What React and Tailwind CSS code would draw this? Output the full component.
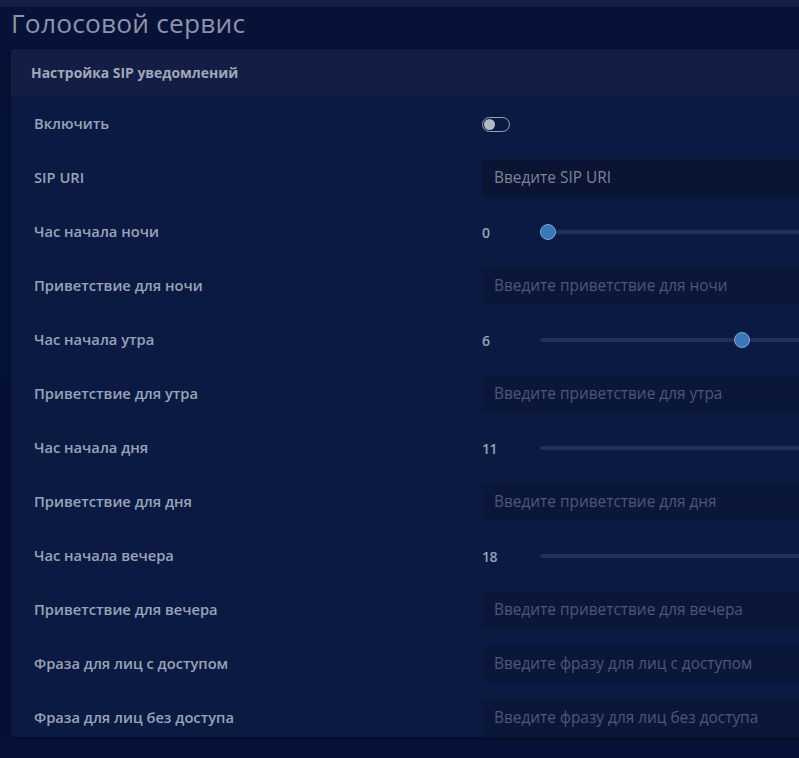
import React from 'react';

const rows = [
  { label: 'Включить', type: 'toggle' },
  { label: 'SIP URI', type: 'input', placeholder: 'Введите SIP URI', active: true },
  { label: 'Час начала ночи', type: 'slider', value: 0 },
  { label: 'Приветствие для ночи', type: 'input', placeholder: 'Введите приветствие для ночи' },
  { label: 'Час начала утра', type: 'slider', value: 6 },
  { label: 'Приветствие для утра', type: 'input', placeholder: 'Введите приветствие для утра' },
  { label: 'Час начала дня', type: 'slider', value: 11 },
  { label: 'Приветствие для дня', type: 'input', placeholder: 'Введите приветствие для дня' },
  { label: 'Час начала вечера', type: 'slider', value: 18 },
  { label: 'Приветствие для вечера', type: 'input', placeholder: 'Введите приветствие для вечера' },
  { label: 'Фраза для лиц с доступом', type: 'input', placeholder: 'Введите фразу для лиц с доступом' },
  { label: 'Фраза для лиц без доступа', type: 'input', placeholder: 'Введите фразу для лиц без доступа' },
];

const Toggle = () => (
  <div className="flex h-[38px] items-center">
    <div className="flex h-[15px] w-[28px] items-center rounded-full border border-[#9aa2b2] px-[1px]">
      <div className="h-[11px] w-[11px] rounded-full bg-[#b3b9c4]" />
    </div>
  </div>
);

const Slider = ({ value }) => (
  <div className="flex h-[38px] items-center">
    <div className="w-[58px] shrink-0 text-[14px] font-semibold tracking-[-0.5px] text-[#9aa3b5]">{value}</div>
    <div className="relative h-[16px] w-[760px] shrink-0">
      <div className="absolute left-0 right-0 top-[6px] h-[4px] rounded-full bg-[#232f58]" />
      <div
        className="absolute top-0 h-[16px] w-[16px] rounded-full border border-[#7fa6cf] bg-[#3878b8]"
        style={{ left: `${(744 * value) / 23}px` }}
      />
    </div>
  </div>
);

const Input = ({ placeholder, active }) => (
  <div
    className={`flex h-[38px] w-[400px] items-center rounded-[4px] px-3 text-[15.4px] ${
      active ? 'bg-[#0a1433] text-[#7c8598]' : 'bg-[#0b1739] text-[#4c5878]'
    }`}
  >
    {placeholder}
  </div>
);

export default function App() {
  return (
    <div
      className="relative h-[758px] w-[799px] overflow-hidden bg-[#061238]"
      style={{ fontFamily: '"Open Sans", "Liberation Sans", sans-serif' }}
    >
      <div className="h-[7px] bg-[#131f44]" />
      <div className="bg-gradient-to-b from-[#061238] to-[#051035] pl-[11px]">
        <h1 className="flex h-[42px] items-center pb-[9px] text-[26.3px] font-normal leading-none tracking-[0.2px] text-[#8c94a6]">
          Голосовой сервис
        </h1>
        <div className="w-[820px] overflow-hidden rounded-[4px] bg-[#0b1a43] shadow-[0_2px_6px_rgba(0,0,0,0.35)]">
          <div className="flex h-[48px] items-center bg-[#121e44] pl-[20px] text-[13.9px] font-bold text-[#a0a8b8]">
            Настройка SIP уведомлений
          </div>
          <div className="flex flex-col gap-4 pt-2">
            {rows.map((row) => (
              <div key={row.label} className="flex items-center">
                <div className="w-[471px] shrink-0 pb-[2px] pl-[23px] text-[14.7px] font-semibold text-[#9aa3b5]">
                  {row.label}
                </div>
                {row.type === 'toggle' && <Toggle />}
                {row.type === 'slider' && <Slider value={row.value} />}
                {row.type === 'input' && <Input placeholder={row.placeholder} active={row.active} />}
              </div>
            ))}
          </div>
        </div>
      </div>
    </div>
  );
}
